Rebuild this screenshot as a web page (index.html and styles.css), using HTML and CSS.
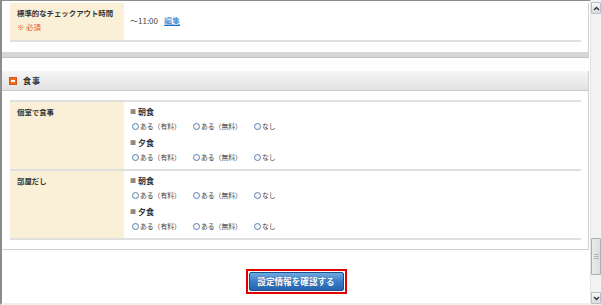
FILE: index.html
```html
<!DOCTYPE html>
<html lang="ja">
<head>
<meta charset="UTF-8">
<meta name="viewport" content="width=device-width, initial-scale=1.0">
<title>設定情報</title>
<link rel="stylesheet" href="styles.css">
</head>
<body>
<div class="window">
    <div class="page">
        <div class="panel panel-top">
            <table class="form-table">
                <tr>
                    <th class="checkout-label">標準的なチェックアウト時間<span class="req">※ 必須</span></th>
                    <td class="checkout-value">～11:00<a href="#" class="edit-link">編集</a></td>
                </tr>
            </table>
            <div class="panel-foot"></div>
        </div>

        <div class="panel panel-meal">
            <div class="panel-head"><span class="toggle"></span>食事</div>
            <table class="form-table">
                <tr>
                    <th>個室で食事</th>
                    <td>
                        <div class="meal-group">
                            <p class="meal-title"><span class="mark">■</span>朝食</p>
                            <div class="radios">
                                <label><span class="radio"></span>ある（有料）</label>
                                <label><span class="radio"></span>ある（無料）</label>
                                <label><span class="radio"></span>なし</label>
                            </div>
                        </div>
                        <div class="meal-group">
                            <p class="meal-title"><span class="mark">■</span>夕食</p>
                            <div class="radios">
                                <label><span class="radio"></span>ある（有料）</label>
                                <label><span class="radio"></span>ある（無料）</label>
                                <label><span class="radio"></span>なし</label>
                            </div>
                        </div>
                    </td>
                </tr>
                <tr>
                    <th>部屋だし</th>
                    <td>
                        <div class="meal-group">
                            <p class="meal-title"><span class="mark">■</span>朝食</p>
                            <div class="radios">
                                <label><span class="radio"></span>ある（有料）</label>
                                <label><span class="radio"></span>ある（無料）</label>
                                <label><span class="radio"></span>なし</label>
                            </div>
                        </div>
                        <div class="meal-group">
                            <p class="meal-title"><span class="mark">■</span>夕食</p>
                            <div class="radios">
                                <label><span class="radio"></span>ある（有料）</label>
                                <label><span class="radio"></span>ある（無料）</label>
                                <label><span class="radio"></span>なし</label>
                            </div>
                        </div>
                    </td>
                </tr>
            </table>
        </div>

        <div class="actions">
            <span class="btn-frame"><button class="confirm-btn">設定情報を確認する</button></span>
        </div>
    </div>

    <div class="scrollbar">
        <div class="sb-btn sb-up">
            <svg width="7" height="5" viewBox="0 0 7 5"><path d="M1 4 L3.5 1.5 L6 4" fill="none" stroke="#333" stroke-width="1.4"/></svg>
        </div>
        <div class="sb-track">
            <div class="sb-thumb"><span class="grip"></span></div>
        </div>
        <div class="sb-btn sb-down">
            <svg width="7" height="5" viewBox="0 0 7 5"><path d="M1 1 L3.5 3.5 L6 1" fill="none" stroke="#333" stroke-width="1.4"/></svg>
        </div>
    </div>
</div>
</body>
</html>
```

FILE: styles.css
```css
body {
    margin: 0;
    font-family: "Noto Sans CJK JP", "Noto Sans", sans-serif;
    color: #333;
    background: #fff;
}

.window {
    display: flex;
    height: 305px;
    overflow: hidden;
}

.page {
    width: 588px;
    border-left: 2px solid #8c8c8c;
    border-top: 1px solid #8c8c8c;
    border-bottom: 2px solid #f1f1ea;
}

.panel {
    margin-right: 1px;
    border-right: 1px solid #d0d0d0;
}

.form-table {
    border-collapse: separate;
    border-spacing: 0;
    margin: 0 7px 0 8px;
    width: calc(100% - 15px);
}

.form-table th {
    width: 107px;
    padding: 4px 0 0 7px;
    background: #faf0d8;
    text-align: left;
    vertical-align: top;
    font-size: 7.4px;
    line-height: 12px;
    font-weight: bold;
    color: #333;
    border-bottom: 2px solid #e0e0e0;
}

.form-table td {
    padding: 4px 6px 6px 6px;
    border-bottom: 2px solid #e0e0e0;
    vertical-align: top;
}

/* top panel */
.panel-top .form-table {
    margin-top: 2px;
}

.panel-top th {
    padding-bottom: 7px;
}

.req {
    display: block;
    margin-top: 2px;
    color: #e2561f;
    font-weight: normal;
}

.checkout-value {
    vertical-align: middle !important;
    font-size: 8px;
    color: #444;
}

.edit-link {
    margin-left: 6px;
    color: #1a6fc9;
    text-decoration: underline;
}

.panel-foot {
    margin-top: 10px;
    height: 5px;
    background: #d6d6d6;
    border-bottom: 1px solid #c2c2c2;
}

/* meal panel */
.panel-meal {
    margin-top: 13px;
    border-bottom: 1px solid #d0d0d0;
    padding-bottom: 9px;
}

.panel-head {
    height: 19px;
    display: flex;
    align-items: center;
    padding-left: 7px;
    background: linear-gradient(#f6f6f6, #e2e2e2);
    border-bottom: 1px solid #cbcbcb;
    font-size: 8px;
    font-weight: bold;
    letter-spacing: 1px;
}

.toggle {
    position: relative;
    width: 8px;
    height: 8px;
    margin-right: 6px;
    background: #f26b1d;
    border: 1px solid #d2561a;
    box-sizing: border-box;
}

.toggle::after {
    content: "";
    position: absolute;
    left: 1px;
    top: 2px;
    width: 4px;
    height: 2px;
    background: #fff;
}

.panel-meal .form-table {
    margin-top: 9px;
    border-top: 2px solid #e0e0e0;
}

.panel-meal th {
    padding-top: 4px;
}

.meal-group + .meal-group {
    margin-top: 5px;
}

.meal-title {
    margin: 0;
    font-size: 8px;
    line-height: 12px;
    font-weight: bold;
    color: #333;
}

.mark {
    font-size: 6px;
    color: #8a8a8a;
    margin-right: 2px;
    vertical-align: 1px;
}

.radios {
    display: flex;
    margin-top: 2px;
    padding-left: 2px;
    height: 12px;
    align-items: center;
    font-size: 6.8px;
    color: #444;
}

.radios label {
    width: 61px;
    display: flex;
    align-items: center;
}

.radio {
    width: 7px;
    height: 7px;
    margin-right: 1px;
    border: 1px solid #5a80ae;
    border-radius: 50%;
    background: #f3f6fa;
    box-sizing: border-box;
}

/* confirm button */
.actions {
    padding-top: 16px;
    text-align: center;
}

.btn-frame {
    display: inline-block;
    padding: 1px;
    border: 2px solid #e00000;
}

.confirm-btn {
    display: block;
    width: 95px;
    height: 19px;
    padding: 0;
    border: 1px solid #1d4f8e;
    border-radius: 2px;
    background: linear-gradient(#6fa9df, #3b7cc6 50%, #2663ae);
    color: #fff;
    font-family: "Noto Sans CJK JP", sans-serif;
    font-size: 8.6px;
    font-weight: bold;
    text-shadow: 0 0 1px #1d4f8e;
}

/* scrollbar */
.scrollbar {
    width: 11px;
    display: flex;
    flex-direction: column;
    background: #f3f3f3;
    border-left: 1px solid #e4e4e4;
    box-sizing: border-box;
}

.sb-btn {
    height: 10px;
    display: flex;
    align-items: center;
    justify-content: center;
    background: linear-gradient(#f8f8f8, #dcdcdc);
    border: 1px solid #b9c0cc;
    border-radius: 1px;
}

.sb-up {
    margin-top: 2px;
}

.sb-track {
    flex: 1;
}

.sb-thumb {
    margin-top: 224px;
    height: 37px;
    display: flex;
    align-items: center;
    justify-content: center;
    background: linear-gradient(90deg, #eaeaea, #dedede);
    border: 1px solid #a8afbd;
    border-radius: 1px;
    box-sizing: border-box;
}

.grip {
    width: 5px;
    height: 5px;
    background: repeating-linear-gradient(#b5b5b5 0 1px, transparent 1px 2px);
}

.sb-down {
    margin-bottom: 1px;
}
```
